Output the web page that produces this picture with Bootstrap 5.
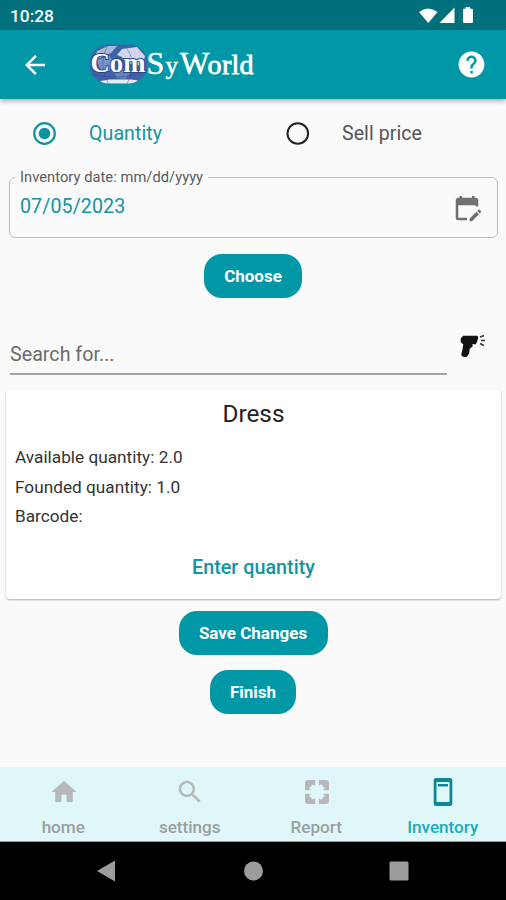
<!DOCTYPE html>
<html lang="en">
<head>
<meta charset="utf-8">
<meta name="viewport" content="width=device-width, initial-scale=1">
<title>Inventory</title>
<link href="https://cdn.jsdelivr.net/npm/bootstrap@5.3.0/dist/css/bootstrap.min.css" rel="stylesheet">
<style>
:root { --teal: #0097a7; }
html, body { height: 100%; }
body { font-family: Roboto, "Liberation Sans", sans-serif; background: #fafafa; color: #222; overflow: hidden; }
svg { display: block; flex: none; }
.phone { width: 506px; height: 900px; }
.status-bar { height: 30px; background: #00707c; font-size: 17.3px; font-weight: 500; line-height: 30px; padding: 2px 27px 0 10px; }
.app-bar { height: 69px; background: var(--teal); padding: 0 19px 0 20px; box-shadow: 0 2px 5px rgba(60,40,40,.4); }
.brand-logo { margin-left: 38px; }
.choices { height: 69px; }
.choice { padding-left: 30px; font-size: 19.6px; letter-spacing: .05px; color: #555; }
.choice span { margin-left: 30px; }
.choice.accent, .accent { color: #1593a2; }
.date-box { margin: 0 8px 0 9px; height: 70px; min-width: 0; }
.date-box fieldset { height: 70px; border: 1.5px solid #bdbdbd; border-radius: 6px; padding: 0 15px 0 10px; }
.date-box legend { float: none; width: auto; margin: 0 0 0 -5px; padding: 0 5px; font-size: 14.7px; line-height: 18px; color: #5c5c5c; letter-spacing: .04px; }
.date-value { font-size: 19.7px; line-height: 26px; letter-spacing: .05px; }
.choose-wrap { padding-top: 16px; }
.btn-teal { --bs-btn-color: #fff; --bs-btn-bg: var(--teal); --bs-btn-hover-color: #fff; --bs-btn-hover-bg: #008a99; --bs-btn-border-width: 0; --bs-btn-border-radius: 18px; height: 44px; font-size: 17px; font-weight: 700; line-height: 44px; padding: 0; }
.btn-choose { width: 98px; }
.btn-save { width: 149px; }
.btn-finish { width: 86px; }
.search-row { padding: 36px 0 0 10px; }
.search-line { width: 437px; height: 41px; border-bottom: 2px solid #a3a3a3; font-size: 19.7px; line-height: 42px; color: #6c6c6c; }
.scanner { margin-left: 12px; margin-top: -1px; }
.item-card { height: 209px; margin: 15px 5px 0 6px; border: 0; border-radius: 4px; background: #fff; box-shadow: 0 1px 2px rgba(0,0,0,.3); }
.item-name { font-size: 24.3px; line-height: 30px; padding-top: 9px; font-weight: 400; }
.facts { font-size: 17.2px; line-height: 29.6px; padding: 14px 9px 0; letter-spacing: .02px; color: #333; }
.enter { font-size: 19.8px; line-height: 24px; margin-top: 24px; }
.end-actions { padding-top: 12px; gap: 15px; }
.tabs { height: 75px; background: #e0f7fa; font-size: 17.1px; font-weight: 500; color: #9a9fa0; border-bottom: 1px solid #8fa0a2; }
.tabs a { color: inherit; text-decoration: none; padding-top: 10px; line-height: 22px; }
.tabs a svg { margin-left: 1px; }
.tabs a span { margin-top: 9px; }
.tabs a.on { color: #18adbf; }
.system-keys { height: 58px; background: #000; }
</style>
<script src="https://cdn.jsdelivr.net/npm/bootstrap@5.3.0/dist/js/bootstrap.bundle.min.js"></script>
</head>
<body>
<div class="phone d-flex flex-column">
  <div class="status-bar d-flex align-items-center justify-content-between text-white">
    <span>10:28</span>
    <svg width="60" height="20" viewBox="0 0 60 20" fill="#fff"><path d="M0 6Q9-1 18.500 6L9.300 17Z"/><path d="M35.500 1.500V17H20.500Z"/><path d="M44 4q0-1.200 1.200-1.200H46.500V1h4.500v1.800h1.800Q54 2.800 54 4v11.800q0 1.200-1.200 1.200h-7.600Q44 17 44 15.800Z"/></svg>
  </div>
  <header class="app-bar d-flex align-items-center">
    <svg width="30" height="30" viewBox="0 0 24 24" fill="#fff"><path d="M20 11H7.830l5.590-5.590L12 4l-8 8 8 8 1.410-1.410L7.830 13H20z"/></svg>
    <svg class="brand-logo" width="170" height="44" viewBox="0 0 170 44" font-family="'Liberation Serif', serif" font-weight="400" fill="#fff">
      <defs><clipPath id="globe"><rect x="2" y="1.500" width="57" height="39" rx="19" ry="17"/></clipPath></defs>
      <g clip-path="url(#globe)">
        <rect width="60" height="44" fill="#3f62a8"/>
        <path d="M9 8L20 3H29L23 10 16 13 7 17Z" fill="#a9b9dc"/>
        <path d="M34 6L49 4 57 13 54 24 46 20 38 22 34 14 29 12Z" fill="#d3d4ea"/>
        <path d="M8 17L22 13 26 21 20 29 13 27Z" fill="#7890c5"/>
        <path d="M25 28L34 25 43 29 37 36 29 35Z" fill="#6681bb"/>
        <path d="M12 38L22 36.500H43L50 37.500 44 42H18Z" fill="#e6eaf5"/>
        <path d="M3 31Q30 38 58 29M20 2Q9 20 21 42M36 2Q52 20 38 42" fill="none" stroke="#2d4789" stroke-width=".8" opacity=".5"/>
      </g>
      <g font-size="27" font-weight="700">
        <text x="2.500" y="28.500" textLength="55" lengthAdjust="spacingAndGlyphs" stroke="#294787" stroke-width="2" paint-order="stroke">Com</text>
      </g>
      <text y="31" stroke="#fff" stroke-width=".5"><tspan x="58.500" font-size="32">S</tspan><tspan x="77.500" font-size="25">y</tspan><tspan x="92" font-size="31">W</tspan><tspan x="119.500 134 143.500 151.500" font-size="28" stroke-width=".8">orld</tspan></text>
    </svg>
    <svg class="ms-auto" width="31" height="31" viewBox="0 0 24 24" fill="#fff"><path d="M12 2C6.480 2 2 6.480 2 12s4.480 10 10 10 10-4.480 10-10S17.520 2 12 2zm1 17h-2v-2h2v2zm2.070-7.750l-.9.920C13.450 12.900 13 13.500 13 15h-2v-.5c0-1.100.45-2.100 1.170-2.830l1.240-1.260c.37-.36.59-.86.59-1.410 0-1.100-.9-2-2-2s-2 .9-2 2H8c0-2.210 1.790-4 4-4s4 1.790 4 4c0 .88-.36 1.680-.93 2.250z"/></svg>
  </header>

  <main class="flex-grow-1">
    <div class="choices row g-0 align-items-center">
      <div class="choice accent col-6 d-flex align-items-center">
        <svg width="29" height="29" viewBox="0 0 29 29"><circle cx="14.500" cy="14.500" r="10.300" fill="none" stroke="#0d92a2" stroke-width="2.200"/><circle cx="14.500" cy="14.500" r="5.800" fill="#0d92a2"/></svg>
        <span>Quantity</span>
      </div>
      <div class="choice col-6 d-flex align-items-center">
        <svg width="29" height="29" viewBox="0 0 29 29"><circle cx="14.800" cy="14.500" r="10.300" fill="none" stroke="#222" stroke-width="2"/></svg>
        <span>Sell price</span>
      </div>
    </div>

    <div class="date-box">
      <fieldset>
        <legend>Inventory date: mm/dd/yyyy</legend>
        <div class="d-flex justify-content-between">
          <span class="date-value accent mt-2">07/05/2023</span>
          <svg class="mt-2" width="30" height="30" viewBox="0 0 24 24" fill="#707070"><path d="M5 19h7v2H5q-2 0-2-2V5q0-2 2-2h1V1.500h2V3h8V1.500h2V3h1q2 0 2 2v5h-2V9H5Z"/><path d="M14 19.700l5.500-5.500 2 2L16 21.700h-2ZM20.200 13.500l.9-.9q.5-.5 1 0l1 1q.5.500 0 1l-.9.900Z"/></svg>
        </div>
      </fieldset>
    </div>

    <div class="text-center choose-wrap"><button class="btn btn-teal btn-choose">Choose</button></div>

    <div class="search-row d-flex">
      <div class="search-line">Search for...</div>
      <svg class="scanner" width="28" height="28" viewBox="0 0 28 28"><path d="M4.500 3.500H18L18.500 5 16.500 10.500H12L13 13 10 15.500 9.500 20 7.500 23Q5 24 3 22L4.500 15 5 11 2.500 9V5.500Z" fill="#111" stroke="#111" stroke-width="1.500" stroke-linejoin="round"/><path d="M21 4L25 2.500M22 7.500H26M21 10.500L25 12.500" fill="none" stroke="#333" stroke-width="1.500"/></svg>
    </div>

    <section class="card item-card">
      <h1 class="item-name text-center mb-0">Dress</h1>
      <div class="facts"><div>Available quantity: 2.0</div><div>Founded quantity: 1.0</div><div>Barcode:</div></div>
      <div class="enter text-center fw-medium accent">Enter quantity</div>
    </section>

    <div class="end-actions d-flex flex-column align-items-center">
      <button class="btn btn-teal btn-save">Save Changes</button>
      <button class="btn btn-teal btn-finish">Finish</button>
    </div>
  </main>

  <nav class="tabs row g-0 text-center">
    <a class="col-3 d-flex flex-column align-items-center" href="#"><svg width="30" height="30" viewBox="0 0 24 24" fill="#b4b8b9"><path d="M10 20v-6h4v6h5v-8h3L12 3 2 12h3v8z"/></svg><span>home</span></a>
    <a class="col-3 d-flex flex-column align-items-center" href="#"><svg width="30" height="30" viewBox="0 0 24 24" fill="#b4b8b9"><path d="M15.500 14h-.79l-.28-.27C15.410 12.590 16 11.110 16 9.500 16 5.910 13.090 3 9.500 3S3 5.910 3 9.500 5.910 16 9.500 16c1.610 0 3.090-.59 4.230-1.570l.27.28v.79l5 4.990L20.490 19l-4.990-5zm-6 0C7.010 14 5 11.990 5 9.500S7.010 5 9.500 5 14 7.010 14 9.500 11.990 14 9.500 14z"/></svg><span>settings</span></a>
    <a class="col-3 d-flex flex-column align-items-center" href="#"><svg width="30" height="30" viewBox="0 0 30 30" fill="#b4b8b9"><path id="corner" d="M3 6q0-3 3-3h7.200v6L11 7.300 7.300 11 9 13.200H3Z"/><use href="#corner" transform="rotate(90 15 15)"/><use href="#corner" transform="rotate(180 15 15)"/><use href="#corner" transform="rotate(270 15 15)"/></svg><span>Report</span></a>
    <a class="col-3 d-flex flex-column align-items-center on" href="#"><svg width="30" height="30" viewBox="0 0 30 30"><path fill="#0b8795" fill-rule="evenodd" d="M8 1H22Q24.300 1 24.300 3.300V26.700Q24.300 29 22 29H8Q5.700 29 5.700 26.700V3.300Q5.700 1 8 1ZM8.500 5V25H21.500V5ZM10 7H20V9.500H10Z"/></svg><span>Inventory</span></a>
  </nav>
  <div class="system-keys row g-0 align-items-center">
    <svg width="506" height="58" viewBox="0 0 506 58" fill="#9c9c9c"><path d="M97 29L115 18.500V39.500Z"/><circle cx="253.500" cy="29" r="9.500"/><rect x="389.500" y="19.500" width="19" height="19" rx="1.500"/></svg>
  </div>
</div>
</body>
</html>
